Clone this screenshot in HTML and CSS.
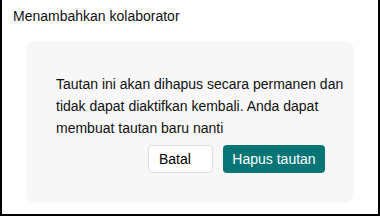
FILE: index.html
```html
<!DOCTYPE html>
<html lang="id">
<head>
  <meta charset="UTF-8" />
  <meta name="viewport" content="width=device-width, initial-scale=1" />
  <title>Menambahkan kolaborator</title>
  <link rel="stylesheet" href="styles.css">
</head>
<body>
  <div class="frame">
    <h2 class="title">Menambahkan kolaborator</h2>
    <div class="panel">
      <p class="message">Tautan ini akan dihapus secara permanen dan tidak dapat diaktifkan kembali. Anda dapat membuat tautan baru nanti</p>
      <div class="actions">
        <button type="button" class="btn btn-cancel">Batal</button>
        <button type="button" class="btn btn-primary">Hapus tautan</button>
      </div>
    </div>
  </div>
</body>
</html>
```

FILE: styles.css
```css
body {
  margin: 0;
  background: #fff;
  font-family: "Liberation Sans", Arial, sans-serif;
  color: #111;
}
.frame {
  width: 380px;
  height: 216px;
  box-sizing: border-box;
  border: 2px solid #000;
  border-top: none;
  padding: 7px 0 0 24px;
}
.title {
  margin: 0 0 0 -13px;
  font-size: 14px;
  font-weight: normal;
  line-height: 18px;
}
.panel {
  margin-top: 16px;
  width: 328px;
  height: 162px;
  box-sizing: border-box;
  background: #f7f7f7;
  border-radius: 9px;
  padding: 32px 29px 0 30px;
}
.message {
  margin: 0;
  width: 292px;
  font-size: 14px;
  line-height: 22px;
}
.actions {
  display: flex;
  justify-content: flex-end;
  gap: 10px;
  margin-top: 6px;
}
.btn {
  font-family: inherit;
  font-size: 14px;
  height: 28px;
  border-radius: 4px;
  cursor: pointer;
}
.btn-cancel {
  width: 65px;
  background: #fff;
  border: 1px solid #dedede;
  color: #000;
  text-align: left;
  padding: 0 10px;
}
.btn-primary {
  width: 102px;
  background: #077575;
  border: none;
  color: #fff;
}
```
